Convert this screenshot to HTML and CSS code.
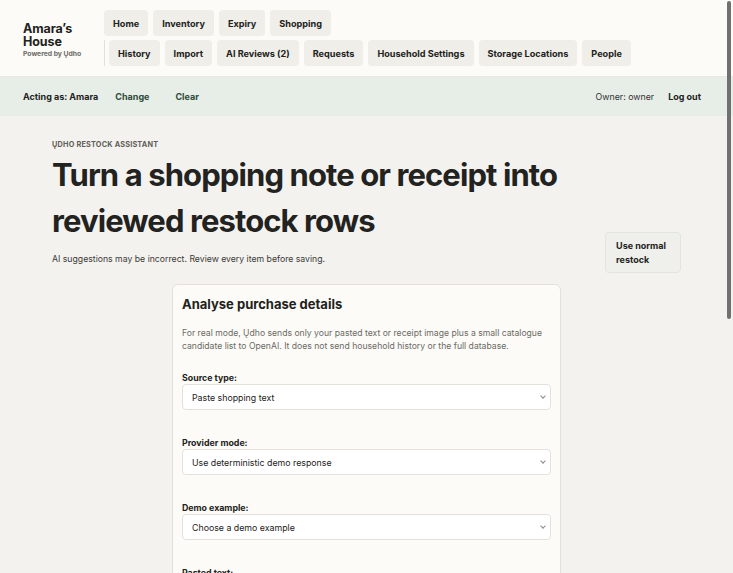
FILE: index.html
```html
<!DOCTYPE html>
<html lang="en">
  <head>
    <meta charset="UTF-8" />
    <meta name="viewport" content="width=device-width, initial-scale=1.0" />
    <title>Restock assistant · Amara's House</title>
    <link rel="stylesheet" href="styles.css">
  </head>
  <body>
    <header class="topbar">
      <div class="brand">
        <strong>Amara’s House</strong>
        <span>Powered by Ųdho</span>
      </div>
      <nav class="nav">
        <div class="nav-group">
          <a class="nav-link" href="#">Home</a>
          <a class="nav-link" href="#">Inventory</a>
          <a class="nav-link" href="#">Expiry</a>
          <a class="nav-link" href="#">Shopping</a>
        </div>
        <div class="nav-group nav-group-secondary">
          <a class="nav-link" href="#">History</a>
          <a class="nav-link" href="#">Import</a>
          <a class="nav-link" href="#">AI Reviews (2)</a>
          <a class="nav-link" href="#">Requests</a>
          <a class="nav-link" href="#">Household Settings</a>
          <a class="nav-link" href="#">Storage Locations</a>
          <a class="nav-link" href="#">People</a>
        </div>
      </nav>
    </header>

    <!-- acting-as bar -->
    <div class="actor-bar">
      <div class="actor-left">
        <strong>Acting as: Amara</strong>
        <button class="link-btn">Change</button>
        <button class="link-btn">Clear</button>
      </div>
      <div class="actor-right">
        <span>Owner: owner</span>
        <button class="link-btn link-btn-dark">Log out</button>
      </div>
    </div>

    <main>
      <section class="hero">
        <div class="hero-text">
          <p class="eyebrow">Ųdho restock assistant</p>
          <h1>Turn a shopping note or receipt into reviewed restock rows</h1>
          <p class="hero-note">AI suggestions may be incorrect. Review every item before saving.</p>
        </div>
        <a class="ghost-btn" href="#">Use normal restock</a>
      </section>

      <section class="card">
        <h2>Analyse purchase details</h2>
        <p class="card-note">
          For real mode, Ųdho sends only your pasted text or receipt image plus a small catalogue
          candidate list to OpenAI. It does not send household history or the full database.
        </p>

        <div class="field">
          <label for="source-type">Source type:</label>
          <div class="select-wrap">
            <select id="source-type">
              <option>Paste shopping text</option>
              <option>Upload receipt image</option>
            </select>
          </div>
        </div>

        <div class="field">
          <label for="provider-mode">Provider mode:</label>
          <div class="select-wrap">
            <select id="provider-mode">
              <option>Use deterministic demo response</option>
              <option>Use OpenAI</option>
            </select>
          </div>
        </div>

        <div class="field">
          <label for="demo-example">Demo example:</label>
          <div class="select-wrap">
            <select id="demo-example">
              <option>Choose a demo example</option>
            </select>
          </div>
        </div>

        <div class="field">
          <label for="pasted-text">Pasted text:</label>
          <textarea id="pasted-text" rows="6"></textarea>
        </div>
      </section>
    </main>

    <div class="scroll-thumb"></div>
  </body>
</html>
```

FILE: styles.css
```css
:root {
  --ink: #222220;
  --muted: #6b6a65;
  --page-bg: #f4f2ee;
  --header-bg: #fcfbf7;
  --actor-bg: #e7eee8;
  --chip-bg: #efeee9;
  --line: #e4e1da;
  --green: #2f4a39;
}

html {
  scrollbar-width: none;
}

body {
  margin: 0;
  font-family: Inter, "Noto Sans", Arial, sans-serif;
  background-color: var(--page-bg);
  color: var(--ink);
}

a {
  color: inherit;
  text-decoration: none;
}

/* Top header */
.topbar {
  background: var(--header-bg);
  border-bottom: 1px solid #e9e8e2;
  display: flex;
  align-items: center;
  gap: 21px;
  padding: 10px 23px;
}

.brand {
  width: 60px;
  flex-shrink: 0;
  display: flex;
  flex-direction: column;
  padding-top: 3px;
}

.brand strong {
  font-size: 12.5px;
  line-height: 13.5px;
  letter-spacing: -0.1px;
}

.brand span {
  font-size: 6.8px;
  font-weight: 700;
  color: #6b6a65;
  margin-top: 0;
  white-space: nowrap;
}

.nav {
  display: flex;
  flex-wrap: wrap;
  gap: 4px 5px;
}

.nav-group {
  display: flex;
  gap: 5px;
}

.nav-group-secondary {
  border-left: 1px solid #e2e0d9;
  padding-left: 4px;
}

.nav-link {
  background: var(--chip-bg);
  border-radius: 4px;
  padding: 0 9px;
  height: 26px;
  display: flex;
  align-items: center;
  font-size: 9.15px;
  font-weight: 700;
}

/* Acting as bar */
.actor-bar {
  background: var(--actor-bg);
  height: 39px;
  padding: 0 23px;
  display: flex;
  align-items: center;
  justify-content: space-between;
  font-size: 9px;
}

.actor-left,
.actor-right {
  display: flex;
  align-items: center;
  gap: 8px;
}

.actor-right {
  gap: 5px;
  color: #333;
  font-size: 8.8px;
}

.link-btn {
  background: none;
  border: none;
  font-family: inherit;
  font-size: 9px;
  font-weight: 700;
  color: var(--green);
  padding: 4px 9px;
  cursor: pointer;
}

.link-btn-dark {
  color: var(--ink);
}

/* Main */
main {
  padding: 24px 52px 40px;
}

.hero {
  display: flex;
  align-items: flex-end;
  justify-content: space-between;
  gap: 24px;
}

.eyebrow {
  margin: 0;
  font-size: 7.3px;
  line-height: 9px;
  font-weight: 700;
  text-transform: uppercase;
  letter-spacing: 0.2px;
  color: #5f5e5a;
}

.hero h1 {
  margin: 3px 0 9px;
  font-size: 31px;
  line-height: 46px;
  font-weight: 700;
  letter-spacing: -0.9px;
  max-width: 530px;
}

.hero-note {
  margin: 0 0 9px;
  font-size: 8.7px;
  line-height: 12px;
  color: #3a3a37;
}

.ghost-btn {
  width: 76px;
  box-sizing: border-box;
  padding: 6px 10px 5px;
  margin-bottom: 1px;
  background: #eff0ec;
  border: 1px solid #e2e4de;
  border-radius: 4px;
  font-size: 9px;
  font-weight: 700;
  line-height: 14px;
}

/* Form card */
.card {
  background: #fcfbf7;
  border: 1px solid var(--line);
  border-radius: 6px;
  width: 389px;
  box-sizing: border-box;
  margin: 10px auto 0;
  padding: 10px 9px 20px;
}

.card h2 {
  margin: 0 0 14px;
  font-size: 13px;
  line-height: 18px;
}

.card-note {
  margin: 0 0 18px;
  font-size: 8.65px;
  line-height: 13px;
  color: var(--muted);
}

.field {
  margin-bottom: 26px;
}

.field label {
  display: block;
  font-size: 8.8px;
  font-weight: 700;
  line-height: 13px;
}

.select-wrap {
  position: relative;
}

.select-wrap::after {
  content: "";
  position: absolute;
  right: 6px;
  top: 10px;
  width: 3px;
  height: 3px;
  border-right: 1px solid #8a8a86;
  border-bottom: 1px solid #8a8a86;
  transform: rotate(45deg);
  pointer-events: none;
}

select,
textarea {
  width: 100%;
  box-sizing: border-box;
  font-family: inherit;
  font-size: 8.8px;
  color: var(--ink);
  background: #fff;
  border: 1px solid var(--line);
  border-radius: 4px;
}

select {
  appearance: none;
  height: 26px;
  padding: 0 9px;
}

.scroll-thumb {
  position: fixed;
  top: 1px;
  right: 2px;
  width: 4px;
  height: 318px;
  border-radius: 3px;
  background: #707070;
}
```
